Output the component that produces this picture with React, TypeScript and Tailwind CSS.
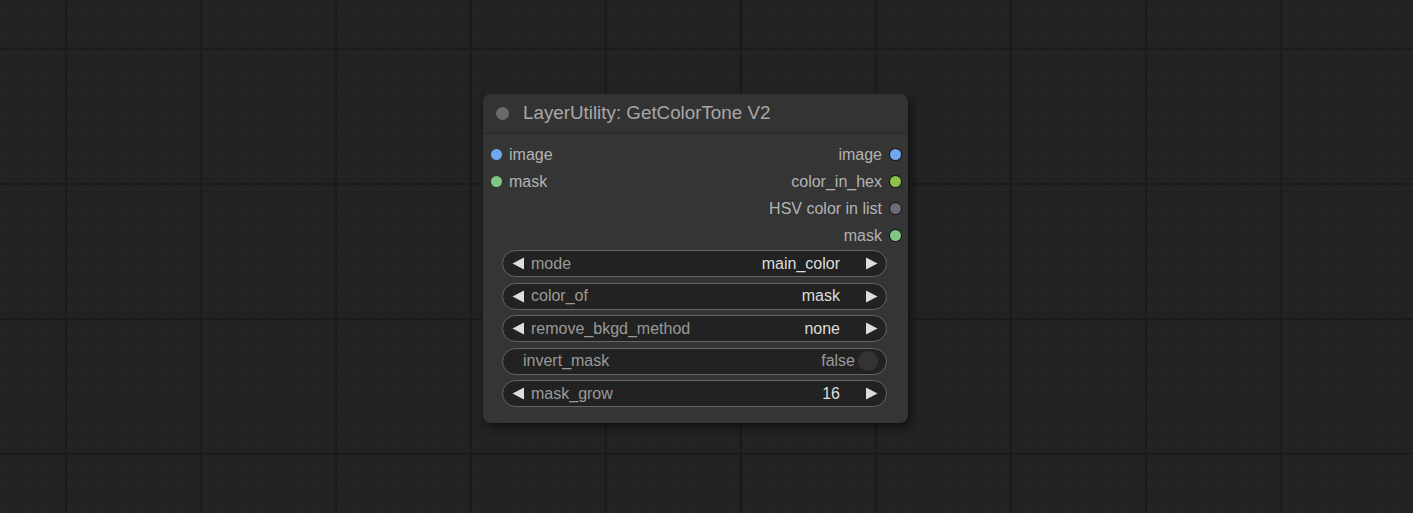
import React from "react";

type Slot = { name: string; color: string; ring?: boolean };

const inputs: Slot[] = [
	{ name: "image", color: "#6fa8f0" },
	{ name: "mask", color: "#81c784" },
];

const outputs: Slot[] = [
	{ name: "image", color: "#6fa8f0", ring: true },
	{ name: "color_in_hex", color: "#8bc34a", ring: true },
	{ name: "HSV color in list", color: "#6b6b78", ring: true },
	{ name: "mask", color: "#81c784", ring: true },
];

const combos = [
	{ label: "mode", value: "main_color" },
	{ label: "color_of", value: "mask" },
	{ label: "remove_bkgd_method", value: "none" },
];

function Dot({ color, ring }: { color: string; ring?: boolean }) {
	return (
		<span
			className={`block h-[11px] w-[11px] rounded-full ${ring ? "ring-1 ring-[#151515]" : ""}`}
			style={{ backgroundColor: color }}
		/>
	);
}

function LeftArrow() {
	return (
		<svg width="13" height="13" viewBox="0 0 13 13" className="shrink-0">
			<polygon points="12,0.5 12,12.5 0.5,6.5" fill="#dddddd" />
		</svg>
	);
}

function RightArrow() {
	return (
		<svg width="13" height="13" viewBox="0 0 13 13" className="shrink-0">
			<polygon points="1,0.5 1,12.5 12.5,6.5" fill="#dddddd" />
		</svg>
	);
}

function ComboWidget({ label, value }: { label: string; value: string }) {
	return (
		<div className="flex h-[27px] items-center rounded-full border border-[#666] bg-[#222] pl-[9px] pr-[8px]">
			<LeftArrow />
			<span className="ml-[6px] text-[#9a9a9a]">{label}</span>
			<span className="ml-auto mr-[25px] text-[#dddddd]">{value}</span>
			<RightArrow />
		</div>
	);
}

function Grid() {
	return (
		<svg className="absolute inset-0 h-full w-full" width="1413" height="513">
			<defs>
				<pattern id="minor" x="66" y="49" width="13.5" height="13.5" patternUnits="userSpaceOnUse">
					<rect width="13.5" height="13.5" fill="#232323" />
					<rect x="0" y="0" width="1" height="13.5" fill="#1f1f1f" />
					<rect x="0" y="0" width="13.5" height="1" fill="#1f1f1f" />
				</pattern>
				<pattern id="major" x="65" y="48" width="135" height="135" patternUnits="userSpaceOnUse">
					<rect width="135" height="135" fill="url(#minor)" />
					<rect x="0" y="0" width="2" height="135" fill="#1b1b1b" />
					<rect x="0" y="0" width="135" height="2" fill="#1b1b1b" />
				</pattern>
			</defs>
			<rect width="1413" height="513" fill="url(#major)" />
		</svg>
	);
}

export default function App() {
	return (
		<div
			className="relative h-[513px] w-[1413px] overflow-hidden bg-[#222]"
			style={{ fontFamily: '"Liberation Sans", Arial, sans-serif' }}
		>
			<Grid />

			{/* node */}
			<div className="absolute left-[483px] top-[94px] w-[425px] rounded-[8px] bg-[#353535] shadow-[3px_4px_8px_rgba(0,0,0,0.55)]">
				<div className="flex h-[40px] items-center rounded-t-[8px] border-b border-[#2b2b2b] bg-[#333333] pl-[13px]">
					<span className="block h-[13px] w-[13px] rounded-full bg-[#6a6a6a]" />
					<span className="ml-[14px] text-[18.8px] text-[#a8a8a8]">LayerUtility: GetColorTone V2</span>
				</div>

				<div className="flex justify-between pt-[7px] text-[16px] text-[#b3b3b3]">
					<div className="flex flex-col pl-[8px]">
						{inputs.map((s) => (
							<div key={s.name} className="flex h-[27px] items-center gap-[7px]">
								<Dot color={s.color} ring={s.ring} />
								<span>{s.name}</span>
							</div>
						))}
					</div>
					<div className="flex flex-col items-end pr-[7px]">
						{outputs.map((s) => (
							<div key={s.name + s.color} className="flex h-[27px] items-center gap-[8px]">
								<span>{s.name}</span>
								<Dot color={s.color} ring={s.ring} />
							</div>
						))}
					</div>
				</div>

				<div className="ml-[19px] mr-[21px] flex flex-col gap-[5.5px] pb-[16px] pt-[1px] text-[16px]">
					{combos.map((c) => (
						<ComboWidget key={c.label} label={c.label} value={c.value} />
					))}
					<div className="flex h-[27px] items-center rounded-full border border-[#666] bg-[#222] pl-[20px] pr-[8px]">
						<span className="text-[#9a9a9a]">invert_mask</span>
						<span className="ml-auto mr-[3px] text-[#9a9a9a]">false</span>
						<span className="block h-[20px] w-[20px] rounded-full bg-[#333]" />
					</div>
					<ComboWidget label="mask_grow" value="16" />
				</div>
			</div>
		</div>
	);
}
